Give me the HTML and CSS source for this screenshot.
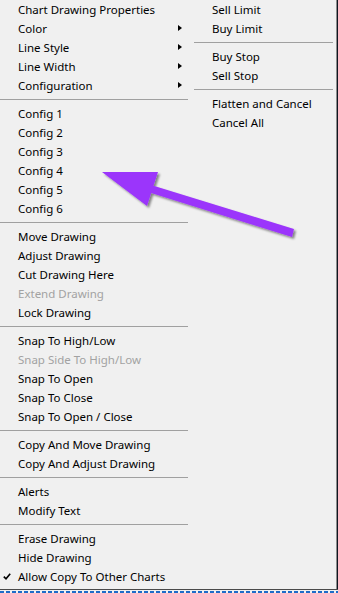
FILE: index.html
```html
<!DOCTYPE html>
<html lang="en">

<head>
    <meta charset="UTF-8">
    <meta name="viewport" content="width=device-width, initial-scale=1.0">
    <title>Chart Drawing Menu</title>
    <link rel="stylesheet" href="styles.css">
</head>

<body>
    <div class="screen">
        <div class="menus">
            <!-- Drawing context menu -->
            <ul class="menu menu-main">
                <li class="item">Chart Drawing Properties</li>
                <li class="item sub">Color <span class="caret"></span></li>
                <li class="item sub">Line Style <span class="caret"></span></li>
                <li class="item sub">Line Width <span class="caret"></span></li>
                <li class="item sub">Configuration <span class="caret"></span></li>
                <li class="sep"></li>
                <li class="item">Config 1</li>
                <li class="item">Config 2</li>
                <li class="item">Config 3</li>
                <li class="item">Config 4</li>
                <li class="item">Config 5</li>
                <li class="item">Config 6</li>
                <li class="sep"></li>
                <li class="item">Move Drawing</li>
                <li class="item">Adjust Drawing</li>
                <li class="item">Cut Drawing Here</li>
                <li class="item disabled">Extend Drawing</li>
                <li class="item">Lock Drawing</li>
                <li class="sep"></li>
                <li class="item">Snap To High/Low</li>
                <li class="item disabled">Snap Side To High/Low</li>
                <li class="item">Snap To Open</li>
                <li class="item">Snap To Close</li>
                <li class="item">Snap To Open / Close</li>
                <li class="sep"></li>
                <li class="item">Copy And Move Drawing</li>
                <li class="item">Copy And Adjust Drawing</li>
                <li class="sep"></li>
                <li class="item">Alerts</li>
                <li class="item">Modify Text</li>
                <li class="sep"></li>
                <li class="item">Erase Drawing</li>
                <li class="item">Hide Drawing</li>
                <li class="item checked">
                    <svg class="check" width="8" height="7" viewBox="0 0 8 7">
                        <path d="M0.8 3.6 L3 5.8 L7.2 0.8" fill="none" stroke="#000" stroke-width="1.6"/>
                    </svg>
                    Allow Copy To Other Charts
                </li>
            </ul>

            <!-- Order menu -->
            <ul class="menu menu-orders">
                <li class="item">Sell Limit</li>
                <li class="item">Buy Limit</li>
                <li class="sep"></li>
                <li class="item">Buy Stop</li>
                <li class="item">Sell Stop</li>
                <li class="sep"></li>
                <li class="item">Flatten and Cancel</li>
                <li class="item">Cancel All</li>
            </ul>
        </div>
        <div class="chart-base"></div>

        <!-- annotation arrow -->
        <svg class="arrow" width="338" height="593" viewBox="0 0 338 593">
            <defs>
                <filter id="shade" x="-20%" y="-20%" width="140%" height="140%">
                    <feDropShadow dx="2" dy="2" stdDeviation="1.2" flood-color="#000" flood-opacity="0.45"/>
                </filter>
            </defs>
            <polygon points="102,172 158,172 153.5,185.8 294,229 292,237 151.2,193 147,206"
                     fill="#9b35fb" filter="url(#shade)"/>
        </svg>
    </div>
</body>

</html>
```

FILE: styles.css
```css
body {
    margin: 0;
    background-color: #0f1520;
    font-family: "Noto Sans", "Open Sans", sans-serif;
    font-size: 11.5px;
    color: #000;
}
.screen {
    position: relative;
    width: 338px;
    height: 593px;
    overflow: hidden;
}
.menus {
    display: flex;
    width: 336px;
    height: 589px;
    background-color: #f0f0f0;
    border-right: 1px solid #8c8c8c;
}
.menu {
    margin: 0;
    padding: 0;
    list-style-type: none;
}
.menu-main {
    width: 194px;
}
.menu-orders {
    flex: 1;
}
.item {
    position: relative;
    display: flex;
    align-items: center;
    height: 19px;
    padding-left: 18px;
    white-space: nowrap;
}
.disabled {
    color: #a2a2a2;
}
.sep {
    height: 9px;
    box-sizing: border-box;
    border-bottom: 1px solid #a0a0a0;
    height: 5px;
    margin-bottom: 4px;
}
.menu-main .sep {
    margin-right: 6px;
}
.menu-orders .sep {
    margin-right: 3px;
}
.caret {
    position: absolute;
    left: 178px;
    top: 6px;
    width: 0;
    height: 0;
    border-left: 4px solid #000;
    border-top: 3.5px solid transparent;
    border-bottom: 3.5px solid transparent;
}
.check {
    position: absolute;
    left: 3px;
    top: 6px;
}
.chart-base {
    height: 3px;
    border-top: 1px solid #4a4a4a;
    background-color: #f0f0f0;
    background-image: repeating-linear-gradient(to right, #1e6cc8 0 4px, transparent 4px 6px);
    background-size: 100% 2px;
    background-position: 0 1px;
    background-repeat: no-repeat;
}
.arrow {
    position: absolute;
    left: 0;
    top: 0;
    pointer-events: none;
}
```
